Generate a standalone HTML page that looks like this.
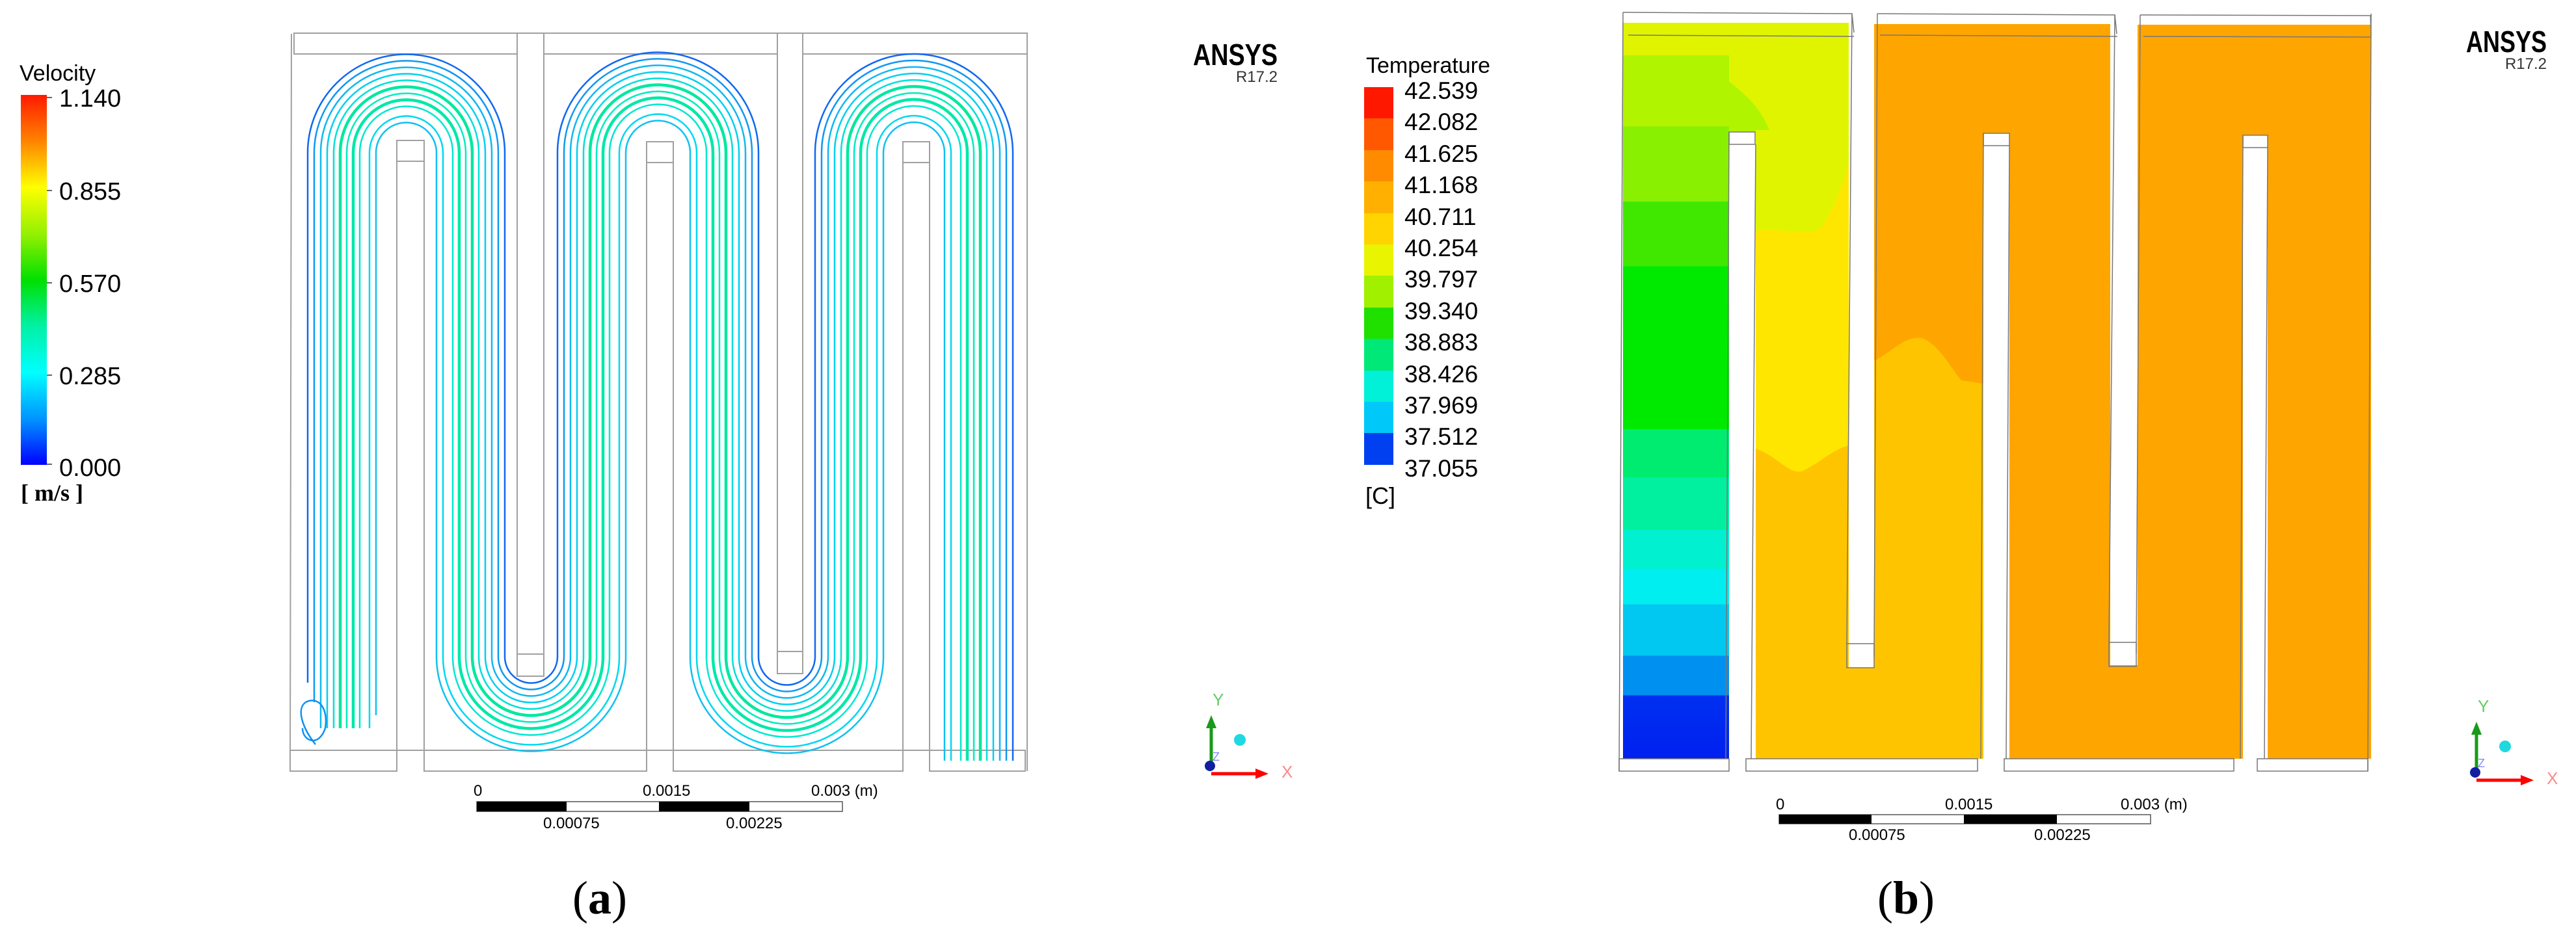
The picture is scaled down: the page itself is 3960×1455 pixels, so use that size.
<!DOCTYPE html>
<html><head><meta charset="utf-8"><style>
html,body{margin:0;padding:0;background:#fff;width:3960px;height:1455px;overflow:hidden}
svg{display:block}
text{font-family:"Liberation Sans",sans-serif}
</style></head><body>
<svg width="3960" height="1455" viewBox="0 0 3960 1455" xmlns="http://www.w3.org/2000/svg">
<defs>
<linearGradient id="vel" x1="0" y1="0" x2="0" y2="1">
<stop offset="0" stop-color="#ff1a00"/><stop offset="0.13" stop-color="#ff8800"/><stop offset="0.25" stop-color="#ffff00"/><stop offset="0.38" stop-color="#90f000"/><stop offset="0.5" stop-color="#00e000"/><stop offset="0.62" stop-color="#00f0a0"/><stop offset="0.75" stop-color="#00ffff"/><stop offset="0.88" stop-color="#0090ff"/><stop offset="1" stop-color="#0000ff"/>
</linearGradient>
<linearGradient id="col1" x1="0" y1="0" x2="0" y2="1">
<stop offset="0" stop-color="#e0f400"/><stop offset="0.044" stop-color="#e0f400"/>
<stop offset="0.044" stop-color="#b0f400"/><stop offset="0.141" stop-color="#b0f400"/>
<stop offset="0.141" stop-color="#88f000"/><stop offset="0.243" stop-color="#88f000"/>
<stop offset="0.243" stop-color="#40e800"/><stop offset="0.331" stop-color="#40e800"/>
<stop offset="0.331" stop-color="#00ea00"/><stop offset="0.552" stop-color="#00ea00"/>
<stop offset="0.552" stop-color="#00ec70"/><stop offset="0.618" stop-color="#00ec70"/>
<stop offset="0.618" stop-color="#00f0a0"/><stop offset="0.689" stop-color="#00f0a0"/>
<stop offset="0.689" stop-color="#00f0d0"/><stop offset="0.742" stop-color="#00f0d0"/>
<stop offset="0.742" stop-color="#00eef0"/><stop offset="0.79" stop-color="#00eef0"/>
<stop offset="0.79" stop-color="#00c8f0"/><stop offset="0.86" stop-color="#00c8f0"/>
<stop offset="0.86" stop-color="#0090f0"/><stop offset="0.914" stop-color="#0090f0"/>
<stop offset="0.914" stop-color="#0030f0"/><stop offset="1" stop-color="#0020f0"/>
</linearGradient>
</defs>

<!-- ===== Panel (a) ===== -->
<text x="30" y="124" font-size="34">Velocity</text>
<rect x="32" y="146" width="40" height="569" fill="url(#vel)"/>
<g stroke="#666" stroke-width="2"><line x1="72" y1="150" x2="80" y2="150"/><line x1="72" y1="293" x2="80" y2="293"/><line x1="72" y1="435" x2="80" y2="435"/><line x1="72" y1="577" x2="80" y2="577"/><line x1="72" y1="714" x2="80" y2="714"/></g>
<g font-size="38">
<text x="91" y="164">1.140</text><text x="91" y="307">0.855</text><text x="91" y="449">0.570</text><text x="91" y="591">0.285</text><text x="91" y="732">0.000</text>
</g>
<text x="32" y="770" font-size="36" font-weight="bold" style="font-family:'Liberation Serif',serif">[  m/s  ]</text>

<!-- geometry a -->
<g fill="none" stroke="#a0a0a0" stroke-width="2">
<line x1="448" y1="52" x2="446" y2="1186"/><line x1="1579" y1="51" x2="1579" y2="1186"/>
<rect x="452" y="51" width="343" height="32"/><rect x="836" y="51" width="359" height="32"/><rect x="1234" y="51" width="345" height="32"/>
<rect x="446" y="1154" width="164" height="32"/><rect x="652" y="1154" width="342" height="32"/><rect x="1035" y="1154" width="353" height="32"/><rect x="1429" y="1154" width="147" height="32"/>
<rect x="610" y="216" width="42" height="938"/><line x1="610" y1="248" x2="652" y2="248"/>
<rect x="994" y="218" width="41" height="936"/><line x1="994" y1="250" x2="1035" y2="250"/>
<rect x="1388" y="218" width="41" height="936"/><line x1="1388" y1="250" x2="1429" y2="250"/>
<rect x="795" y="51" width="41" height="989"/><line x1="795" y1="1006" x2="836" y2="1006"/>
<rect x="1195" y="51" width="39" height="985"/><line x1="1195" y1="1002" x2="1234" y2="1002"/>
</g>

<!-- streamlines -->
<g fill="none" stroke-width="2.5">
<path stroke="#10c0f0" d="M578 1100 V235 A1 1 0 0 1 671 235 V1010 A1 1 0 0 0 962 1010 V235 A1 1 0 0 1 1061 235 V1010 A1 1 0 0 0 1358 1010 V235 A1 1 0 0 1 1452 235 V1170"/>
<path stroke="#00d8f0" d="M568 1120 V235 A1 1 0 0 1 681 235 V1010 A1 1 0 0 0 952 1010 V235 A1 1 0 0 1 1071 235 V1010 A1 1 0 0 0 1348 1010 V235 A1 1 0 0 1 1462 235 V1170"/>
<path stroke="#00e8d0" d="M553 1120 V235 A1 1 0 0 1 696 235 V1010 A1 1 0 0 0 937 1010 V235 A1 1 0 0 1 1086 235 V1010 A1 1 0 0 0 1333 1010 V235 A1 1 0 0 1 1477 235 V1170"/>
<path stroke="#00e8a8" stroke-width="4.5" d="M543 1120 V235 A1 1 0 0 1 706 235 V1010 A1 1 0 0 0 927 1010 V235 A1 1 0 0 1 1096 235 V1010 A1 1 0 0 0 1323 1010 V235 A1 1 0 0 1 1487 235 V1170"/>
<path stroke="#00ecc0" d="M533 1120 V235 A1 1 0 0 1 716 235 V1010 A1 1 0 0 0 917 1010 V235 A1 1 0 0 1 1106 235 V1010 A1 1 0 0 0 1313 1010 V235 A1 1 0 0 1 1497 235 V1170"/>
<path stroke="#00e8a0" stroke-width="4.5" d="M523 1120 V235 A1 1 0 0 1 726 235 V1010 A1 1 0 0 0 907 1010 V235 A1 1 0 0 1 1116 235 V1010 A1 1 0 0 0 1303 1010 V235 A1 1 0 0 1 1507 235 V1170"/>
<path stroke="#00e0d8" d="M513 1120 V235 A1 1 0 0 1 736 235 V1010 A1 1 0 0 0 897 1010 V235 A1 1 0 0 1 1126 235 V1010 A1 1 0 0 0 1293 1010 V235 A1 1 0 0 1 1517 235 V1170"/>
<path stroke="#00d0f0" d="M503 1120 V235 A1 1 0 0 1 746 235 V1010 A1 1 0 0 0 887 1010 V235 A1 1 0 0 1 1136 235 V1010 A1 1 0 0 0 1283 1010 V235 A1 1 0 0 1 1527 235 V1170"/>
<path stroke="#10b8f0" d="M493 1120 V235 A1 1 0 0 1 756 235 V1010 A1 1 0 0 0 877 1010 V235 A1 1 0 0 1 1146 235 V1010 A1 1 0 0 0 1273 1010 V235 A1 1 0 0 1 1537 235 V1170"/>
<path stroke="#1098f0" d="M483 1080 V235 A1 1 0 0 1 766 235 V1010 A1 1 0 0 0 867 1010 V235 A1 1 0 0 1 1156 235 V1010 A1 1 0 0 0 1263 1010 V235 A1 1 0 0 1 1547 235 V1170"/>
<path stroke="#1068f0" d="M473 1050 V235 A1 1 0 0 1 776 235 V1010 A1 1 0 0 0 857 1010 V235 A1 1 0 0 1 1166 235 V1010 A1 1 0 0 0 1253 1010 V235 A1 1 0 0 1 1557 235 V1170"/>
<path stroke="#1090f0" d="M485 1145 C465 1120 455 1090 470 1080 C490 1070 505 1090 500 1120 C490 1150 465 1140 465 1120"/>
</g>

<!-- scale bar a -->
<g font-size="24">
<text x="728" y="1224">0</text><text x="988" y="1224">0.0015</text><text x="1247" y="1224">0.003  (m)</text>
<text x="835" y="1274">0.00075</text><text x="1116" y="1274">0.00225</text>
</g>
<rect x="733" y="1233" width="562" height="15" fill="#fff" stroke="#555" stroke-width="1.5"/>
<rect x="733" y="1233" width="138" height="15" fill="#000"/><rect x="1013" y="1233" width="139" height="15" fill="#000"/>

<!-- ANSYS a -->
<text x="1964" y="100" font-size="46" font-weight="bold" text-anchor="end" textLength="130" lengthAdjust="spacingAndGlyphs">ANSYS</text>
<text x="1964" y="126" font-size="24" text-anchor="end" fill="#333">R17.2</text>

<!-- triad a -->
<g id="triad">
<text x="1864" y="1085" font-size="26" fill="#6c6">Y</text>
<line x1="1862" y1="1180" x2="1862" y2="1118" stroke="#1a9a1a" stroke-width="5"/>
<polygon points="1854,1120 1870,1120 1862,1100" fill="#1a9a1a"/>
<line x1="1862" y1="1190" x2="1932" y2="1190" stroke="#f00" stroke-width="5"/>
<polygon points="1930,1182 1930,1198 1950,1190" fill="#f00"/>
<text x="1864" y="1170" font-size="18" fill="#88f">Z</text>
<circle cx="1860" cy="1178" r="8" fill="#1020a0"/>
<circle cx="1906" cy="1138" r="9" fill="#20d8e0"/>
<text x="1970" y="1196" font-size="26" fill="#f88">X</text>
</g>

<text x="922" y="1405" font-size="72" text-anchor="middle" style="font-family:'Liberation Serif',serif">(<tspan font-weight="bold">a</tspan>)</text>

<!-- ===== Panel (b) ===== -->
<text x="2100" y="112" font-size="34">Temperature</text>
<g>
<rect x="2097" y="134" width="45" height="49" fill="#ff1800"/>
<rect x="2097" y="182" width="45" height="49" fill="#ff5800"/>
<rect x="2097" y="231" width="45" height="49" fill="#ff8c00"/>
<rect x="2097" y="279" width="45" height="49" fill="#ffb000"/>
<rect x="2097" y="328" width="45" height="49" fill="#ffd400"/>
<rect x="2097" y="376" width="45" height="49" fill="#e8f400"/>
<rect x="2097" y="424" width="45" height="49" fill="#a0f000"/>
<rect x="2097" y="473" width="45" height="49" fill="#20e000"/>
<rect x="2097" y="521" width="45" height="49" fill="#00e878"/>
<rect x="2097" y="570" width="45" height="49" fill="#00f0d8"/>
<rect x="2097" y="618" width="45" height="49" fill="#00c8f8"/>
<rect x="2097" y="666" width="45" height="49" fill="#0040f0"/>
</g>
<g font-size="37">
<text x="2159" y="152">42.539</text><text x="2159" y="200">42.082</text><text x="2159" y="249">41.625</text><text x="2159" y="297">41.168</text><text x="2159" y="346">40.711</text><text x="2159" y="394">40.254</text><text x="2159" y="442">39.797</text><text x="2159" y="491">39.340</text><text x="2159" y="539">38.883</text><text x="2159" y="588">38.426</text><text x="2159" y="636">37.969</text><text x="2159" y="684">37.512</text><text x="2159" y="733">37.055</text>
</g>
<text x="2099" y="775" font-size="36">[C]</text>

<!-- fills b -->
<rect x="2495" y="35" width="347" height="170" fill="#e0f400"/>
<path d="M2495 110 C2540 90 2600 80 2640 110 C2660 130 2700 150 2720 200 L2658 205 H2495Z" fill="#b0f400"/>
<rect x="2495" y="35" width="163" height="1132" fill="url(#col1)"/>
<rect x="2699" y="200" width="143" height="160" fill="#e0f400"/>
<path d="M2699 355 C2740 350 2780 365 2800 350 C2820 320 2835 280 2842 250 V780 H2699Z" fill="#ffe600"/>
<path d="M2699 690 C2730 700 2750 730 2770 725 C2800 710 2820 690 2842 685 V1167 H2699Z" fill="#ffc400"/>
<rect x="2842" y="1027" width="39" height="140" fill="#ffc400"/>
<rect x="2881" y="37" width="363" height="1130" fill="#ffa500"/>
<path d="M2881 555 C2910 540 2930 515 2955 520 C2980 530 2995 560 3015 585 L3049 590 V1167 H2881Z" fill="#ffc400"/>
<rect x="3244" y="1023" width="42" height="144" fill="#ffa500"/>
<rect x="3286" y="38" width="359" height="1129" fill="#ffa500"/>
<rect x="2658" y="203" width="41" height="984" fill="#fff"/>
<rect x="2842" y="20" width="39" height="985" fill="#fff"/>
<rect x="3049" y="205" width="40" height="982" fill="#fff"/>
<rect x="3244" y="20" width="42" height="983" fill="#fff"/>
<rect x="3448" y="208" width="38" height="979" fill="#fff"/>
<g fill="none" stroke="#777" stroke-width="1.5">
<line x1="2495" y1="19" x2="2489" y2="1186"/><line x1="3645" y1="21" x2="3640" y2="1186"/>
<polyline points="2495,19 2847,21 2850,50"/><line x1="2503" y1="54" x2="2850" y2="56"/>
<polyline points="2886,21 3251,23 3254,52"/><line x1="2890" y1="54" x2="3255" y2="56"/>
<polyline points="3290,23 3644,24 3645,55"/><line x1="3295" y1="56" x2="3645" y2="57"/>
<rect x="2489" y="1167" width="169" height="19"/>
<rect x="2684" y="1167" width="356" height="19"/>
<rect x="3081" y="1167" width="353" height="19"/>
<rect x="3470" y="1167" width="170" height="19"/>
<rect x="2658" y="203" width="40" height="19"/><line x1="2699" y1="222" x2="2692" y2="1167"/><line x1="2658" y1="203" x2="2653" y2="1167"/>
<rect x="3049" y="205" width="40" height="19"/><line x1="3089" y1="224" x2="3084" y2="1167"/><line x1="3049" y1="205" x2="3045" y2="1167"/>
<rect x="3448" y="208" width="38" height="19"/><line x1="3486" y1="227" x2="3481" y2="1167"/><line x1="3448" y1="208" x2="3444" y2="1167"/>
<rect x="2839" y="990" width="42" height="37"/><line x1="2847" y1="21" x2="2839" y2="990"/><line x1="2886" y1="21" x2="2881" y2="1010"/>
<rect x="3242" y="988" width="42" height="37"/><line x1="3251" y1="23" x2="3242" y2="988"/><line x1="3290" y1="23" x2="3284" y2="1005"/>
</g>

<g font-size="24">
<text x="2730" y="1245">0</text><text x="2990" y="1245">0.0015</text><text x="3260" y="1245">0.003  (m)</text>
<text x="2842" y="1292">0.00075</text><text x="3127" y="1292">0.00225</text>
</g>
<rect x="2735" y="1253" width="571" height="14" fill="#fff" stroke="#555" stroke-width="1.5"/>
<rect x="2735" y="1253" width="142" height="14" fill="#000"/><rect x="3019" y="1253" width="143" height="14" fill="#000"/>

<text x="3915" y="80" font-size="46" font-weight="bold" text-anchor="end" textLength="124" lengthAdjust="spacingAndGlyphs">ANSYS</text>
<text x="3915" y="106" font-size="24" text-anchor="end" fill="#333">R17.2</text>

<use href="#triad" transform="translate(1945,10)"/>

<text x="2930" y="1405" font-size="72" text-anchor="middle" style="font-family:'Liberation Serif',serif">(<tspan font-weight="bold">b</tspan>)</text>
</svg>
</body></html>
